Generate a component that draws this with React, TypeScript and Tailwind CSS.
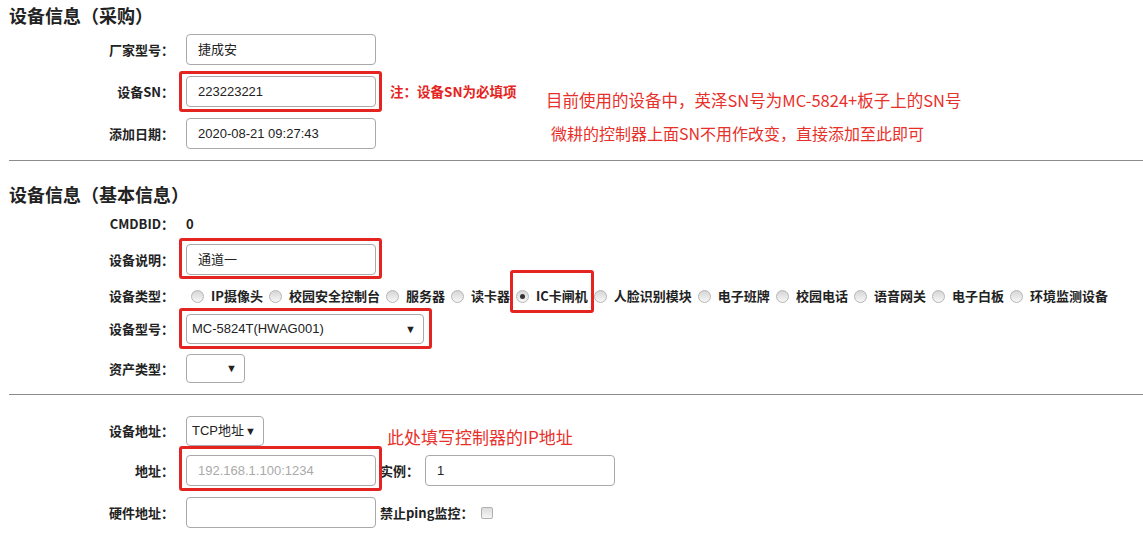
import React from 'react';

const cjk = "font-['Noto_Sans_CJK_SC',sans-serif]";
const arial = "font-['Liberation_Sans','Noto_Sans_CJK_SC',sans-serif]";

const Label: React.FC<{ text: string }> = ({ text }) => (
  <div className={`w-[174px] shrink-0 text-right text-[13px] font-bold text-[#222] ${cjk}`}>{text}</div>
);

const TextBox: React.FC<{ value?: string; placeholder?: string; width?: string }> = ({ value, placeholder, width = 'w-[190px]' }) => (
  <div
    className={`${width} h-[31px] flex items-center px-[11px] border border-[#a9a9a9] rounded-[4px] text-[13px] ${arial} ${
      value ? 'text-[#222]' : 'text-[#aaa]'
    }`}
  >
    {value || placeholder}
  </div>
);

const Select: React.FC<{ value: string; width: string; h?: string }> = ({ value, width, h = 'h-[30px]' }) => (
  <div className={`${width} ${h} flex items-center justify-between pl-[5px] pr-[7px] border border-[#a9a9a9] rounded-[4px] text-[13px] text-[#222] ${arial}`}>
    <span>{value}</span>
    <span className="text-[11px] leading-none">▼</span>
  </div>
);

const Radio: React.FC<{ checked?: boolean }> = ({ checked }) => (
  <span className="w-[13px] h-[13px] rounded-full border border-[#b5b5b5] bg-gradient-to-b from-[#d6d6d6] to-[#f7f7f7] flex items-center justify-center shrink-0">
    {checked && <span className="w-[5px] h-[5px] rounded-full bg-[#333]" />}
  </span>
);

const RedBox: React.FC<{ cls: string }> = ({ cls }) => (
  <div className={`absolute border-[3px] border-[#e42420] rounded-[3px] ${cls}`} />
);

const types = ['IP摄像头', '校园安全控制台', '服务器', '读卡器', 'IC卡闸机', '人脸识别模块', '电子班牌', '校园电话', '语音网关', '电子白板', '环境监测设备'];

export default function App() {
  return (
    <div className={`relative w-[1143px] h-[536px] overflow-hidden bg-white text-[#222] ${cjk}`}>
      <div className="flex flex-col">
        <div className="h-[30px] ml-[9px] flex items-center text-[18px] font-bold">设备信息（采购）</div>

        <div className="mt-[4px] h-[31px] flex items-center">
          <Label text="厂家型号：" />
          <div className="ml-[12px]"><TextBox value="捷成安" /></div>
        </div>
        <div className="mt-[11px] h-[31px] flex items-center">
          <Label text="设备SN：" />
          <div className="ml-[12px]"><TextBox value="223223221" /></div>
          <span className="ml-[14px] text-[13.5px] font-bold text-[#e42420]">注：设备SN为必填项</span>
        </div>
        <div className="mt-[11px] h-[31px] flex items-center">
          <Label text="添加日期：" />
          <div className="ml-[12px]"><TextBox value="2020-08-21 09:27:43" /></div>
        </div>

        <div className="mt-[11px] ml-[9px] border-t border-[#8c8c8c]" />

        <div className="mt-[18px] h-[30px] ml-[9px] flex items-center text-[18px] font-bold">设备信息（基本信息）</div>

        <div className="mt-[5px] h-[20px] flex items-center">
          <Label text="CMDBID：" />
          <span className="ml-[12px] text-[13px] font-bold">0</span>
        </div>
        <div className="mt-[10px] h-[31px] flex items-center">
          <Label text="设备说明：" />
          <div className="ml-[12px]"><TextBox value="通道一" /></div>
        </div>
        <div className="mt-[10px] h-[22px] flex items-center">
          <Label text="设备类型：" />
          <div className="ml-[17px] flex items-center text-[13px] font-bold">
            {types.map((t) => (
              <div key={t} className="flex items-center mr-[6px]">
                <Radio checked={t === 'IC卡闸机'} />
                <span className="ml-[7px]">{t}</span>
              </div>
            ))}
          </div>
        </div>
        <div className="mt-[7px] h-[30px] flex items-center">
          <Label text="设备型号：" />
          <div className="ml-[12px]"><Select value="MC-5824T(HWAG001)" width="w-[238px]" /></div>
        </div>
        <div className="mt-[10px] h-[29px] flex items-center">
          <Label text="资产类型：" />
          <div className="ml-[12px]"><Select value="" width="w-[59px]" h="h-[29px]" /></div>
        </div>

        <div className="mt-[11px] ml-[9px] border-t border-[#8c8c8c]" />

        <div className="mt-[21px] h-[30px] flex items-center">
          <Label text="设备地址：" />
          <div className="ml-[12px]"><Select value="TCP地址" width="w-[78px]" /></div>
        </div>
        <div className="mt-[9px] h-[31px] flex items-center">
          <Label text="地址：" />
          <div className="ml-[12px]"><TextBox placeholder="192.168.1.100:1234" /></div>
          <span className="ml-[4px] w-[45px] text-[13px] font-bold">实例：</span>
          <TextBox value="1" />
        </div>
        <div className="mt-[11px] h-[31px] flex items-center">
          <Label text="硬件地址：" />
          <div className="ml-[12px]"><TextBox /></div>
          <span className="ml-[4px] text-[13px] font-bold">禁止ping监控：</span>
          <span className="ml-[8px] w-[12px] h-[12px] rounded-[2px] border border-[#b0b0b0] bg-gradient-to-b from-[#dcdcdc] to-[#f5f5f5]" />
        </div>
      </div>

      <div className="absolute left-[546px] top-[89px] text-[16.5px] leading-[22px] text-[#e8302a]">目前使用的设备中，英泽SN号为MC-5824+板子上的SN号</div>
      <div className="absolute left-[551px] top-[122px] text-[16px] leading-[22px] text-[#e8302a]">微耕的控制器上面SN不用作改变，直接添加至此即可</div>
      <div className="absolute left-[387px] top-[426px] text-[17px] leading-[22px] text-[#e8302a]">此处填写控制器的IP地址</div>

      <RedBox cls="left-[179px] top-[71px] w-[203px] h-[41px]" />
      <RedBox cls="left-[179px] top-[238px] w-[203px] h-[41px]" />
      <RedBox cls="left-[510px] top-[270px] w-[84px] h-[43px]" />
      <RedBox cls="left-[179px] top-[308px] w-[253px] h-[41px]" />
      <RedBox cls="left-[179px] top-[446px] w-[203px] h-[45px]" />
    </div>
  );
}
